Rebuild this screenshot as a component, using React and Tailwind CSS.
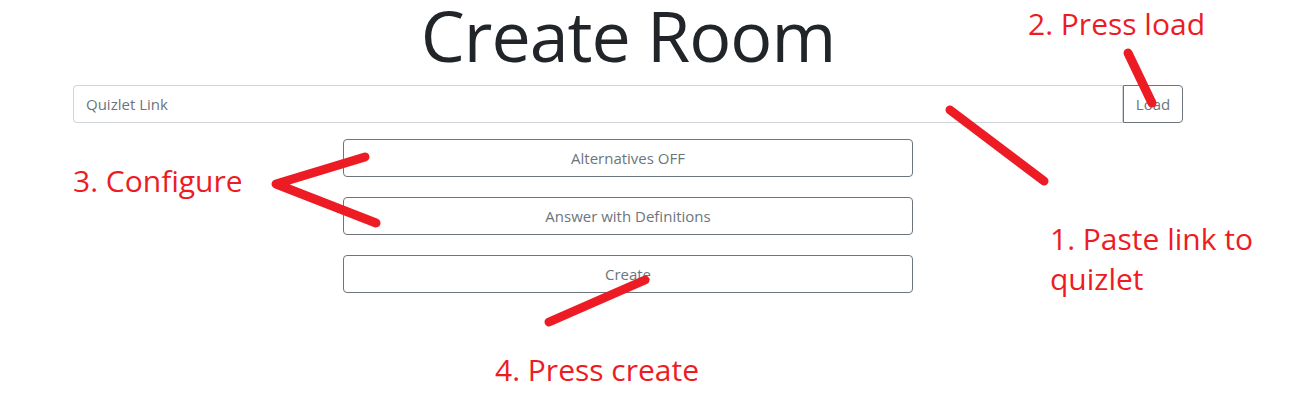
export default function App() {
    const font = { fontFamily: '"Open Sans", "Noto Sans", sans-serif' }

    return (
        <div className="relative h-[412px] w-[1292px] overflow-hidden bg-white" style={font}>
            <div className="ml-[73px] flex w-[1110px] flex-col items-center">
                <h1 className="text-[70px] leading-none font-normal text-[#212529] tracking-[-1px]">Create Room</h1>

                {/* Quizlet link input */}
                <div className="mt-[15px] flex w-full">
                    <input
                        type="text"
                        placeholder="Quizlet Link"
                        className="h-[38px] flex-1 rounded-l-[4px] border border-[#ced4da] px-3 text-[15px] text-[#495057] placeholder:text-[#6c757d] outline-none"
                    />
                    <button className="h-[38px] w-[60px] rounded-r-[4px] border border-[#6c757d] text-[15px] text-[#6c757d]">
                        Load
                    </button>
                </div>

                <div className="mt-4 flex w-[570px] flex-col gap-5">
                    <button className="h-[38px] rounded-[4px] border border-[#6c757d] text-[15px] text-[#6c757d]">Alternatives OFF</button>
                    <button className="h-[38px] rounded-[4px] border border-[#6c757d] text-[15px] text-[#6c757d]">Answer with Definitions</button>
                    <button className="h-[38px] rounded-[4px] border border-[#6c757d] text-[15px] text-[#6c757d]">Create</button>
                </div>
            </div>

            {/* Annotation strokes */}
            <svg className="pointer-events-none absolute inset-0" width="1292" height="412">
                <g stroke="#ed1c24" strokeWidth="9" strokeLinecap="round" strokeLinejoin="round" fill="none">
                    <path d="M950 110 L1044 181" />
                    <path d="M1128 53 L1152 103" />
                    <path d="M365 157 L276 184 L376 223" />
                    <path d="M549 322 L645 280" />
                </g>
            </svg>

            {/* Annotation labels */}
            <div className="absolute left-[1028px] top-[4px] text-[30px] leading-[40px] text-[#ed1c24]">2. Press load</div>
            <div className="absolute left-[73px] top-[161px] text-[30px] leading-[40px] text-[#ed1c24]">3. Configure</div>
            <div className="absolute left-[1050px] top-[219px] text-[30px] leading-[40px] text-[#ed1c24]">
                1. Paste link to
                <br />
                quizlet
            </div>
            <div className="absolute left-[495px] top-[350px] text-[30px] leading-[40px] text-[#ed1c24]">4. Press create</div>
        </div>
    )
}
